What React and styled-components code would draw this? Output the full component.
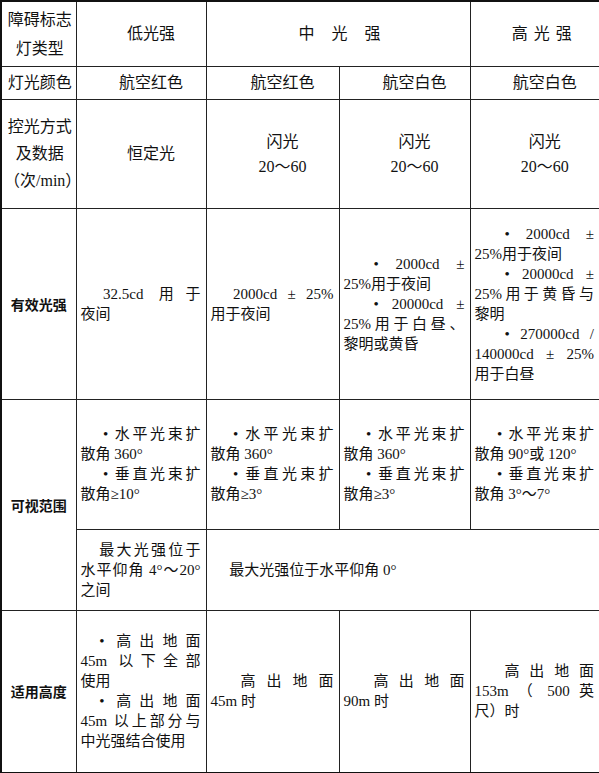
import React from 'react'
import styled, { createGlobalStyle } from 'styled-components'

const GlobalStyle = createGlobalStyle`
  html, body {
    margin: 0;
    padding: 0;
    background: #fff;
  }
  body {
    font-family: "Liberation Serif", "Noto Sans CJK SC", serif;
    color: #111;
  }
`

const Sheet = styled.table`
  width: 599px;
  table-layout: fixed;
  border-collapse: collapse;
  border: 2px solid #111;
`

const Row = styled.tr`
  height: ${p => p.$h}px;
`

const Head = styled.td`
  border: 1px solid #222;
  text-align: center;
  vertical-align: middle;
  font-size: 16px;
  line-height: ${p => p.$lh || 26}px;
  padding: 0 0 0 ${p => (p.$pl === undefined ? 20 : p.$pl)}px;
  letter-spacing: ${p => p.$ls || 0}px;
`

const Label = styled.td`
  border: 1px solid #222;
  text-align: center;
  vertical-align: middle;
  padding: 0 2px;
  font-family: "Noto Sans CJK SC", sans-serif;
  font-size: 14px;
  font-weight: 700;
`

const Text = styled.td`
  border: 1px solid #222;
  vertical-align: middle;
  padding: 0 5px 0 4px;
  font-size: 15px;
  line-height: 20px;
`

const Line = styled.span`
  display: block;
  text-align: ${p => (p.$fill ? 'justify' : 'left')};
  text-align-last: ${p => (p.$fill ? 'justify' : 'auto')};
  text-indent: ${p => p.$indent || 0};
`

const Block = ({ paras, indent = '2em' }) =>
  paras.map((lines, i) => (
    <div key={i}>
      {lines.map((t, j) => (
        <Line key={j} $fill={j < lines.length - 1} $indent={j === 0 ? indent : 0}>
          {t}
        </Line>
      ))}
    </div>
  ))

const intensity = [
  { indent: '1.5em', paras: [['32.5cd 用于', '夜间']] },
  { indent: '1.5em', paras: [['2000cd ± 25%', '用于夜间']] },
  {
    paras: [
      ['• 2000cd ±', '25%用于夜间'],
      ['• 20000cd ±', '25%用于白昼、', '黎明或黄昏'],
    ],
  },
  {
    paras: [
      ['• 2000cd ±', '25%用于夜间'],
      ['• 20000cd ±', '25%用于黄昏与', '黎明'],
      ['• 270000cd /', '140000cd ± 25%', '用于白昼'],
    ],
  },
]

const beam = [
  [['• 水平光束扩', '散角 360°'], ['• 垂直光束扩', '散角≥10°']],
  [['• 水平光束扩', '散角 360°'], ['• 垂直光束扩', '散角≥3°']],
  [['• 水平光束扩', '散角 360°'], ['• 垂直光束扩', '散角≥3°']],
  [['• 水平光束扩', '散角 90°或 120°'], ['• 垂直光束扩', '散角 3°～7°']],
]

const height = [
  {
    indent: '1.25em',
    paras: [
      ['• 高出地面', '45m 以下全部', '使用'],
      ['• 高出地面', '45m 以上部分与', '中光强结合使用'],
    ],
  },
  { paras: [['高出地面', '45m 时']] },
  { paras: [['高出地面', '90m 时']] },
  { paras: [['高出地面', '153m （ 500 英', '尺）时']] },
]

const App = () => (
  <>
    <GlobalStyle />
    <Sheet>
      <colgroup>
        <col style={{ width: 75 }} />
        <col style={{ width: 130 }} />
        <col style={{ width: 133 }} />
        <col style={{ width: 131 }} />
        <col style={{ width: 130 }} />
      </colgroup>
      <tbody>
        <Row $h={65}>
          <Head $pl={2} $lh={29}>
            障碍标志
            <br />
            灯类型
          </Head>
          <Head>低光强</Head>
          <Head colSpan={2} $ls={17}>
            中光强
          </Head>
          <Head $ls={6}>高光强</Head>
        </Row>
        <Row $h={33}>
          <Head $pl={2}>灯光颜色</Head>
          <Head>航空红色</Head>
          <Head>航空红色</Head>
          <Head>航空白色</Head>
          <Head>航空白色</Head>
        </Row>
        <Row $h={109}>
          <Head $pl={2} $lh={27}>
            控光方式
            <br />
            及数据
            <br />
            （次/min）
          </Head>
          <Head>恒定光</Head>
          {[0, 1, 2].map(i => (
            <Head key={i} $lh={25}>
              闪光
              <br />
              20～60
            </Head>
          ))}
        </Row>
        <Row $h={191}>
          <Label>有效光强</Label>
          {intensity.map((c, i) => (
            <Text key={i}>
              <Block paras={c.paras} indent={c.indent} />
            </Text>
          ))}
        </Row>
        <Row $h={130}>
          <Label rowSpan={2}>可视范围</Label>
          {beam.map((paras, i) => (
            <Text key={i}>
              <Block paras={paras} indent="1.5em" />
            </Text>
          ))}
        </Row>
        <Row $h={81}>
          <Text>
            <Block paras={[['最大光强位于', '水平仰角 4°～20°', '之间']]} indent="1.25em" />
          </Text>
          <Text colSpan={3}>
            <Block paras={[['最大光强位于水平仰角 0°']]} indent="1.25em" />
          </Text>
        </Row>
        <Row $h={163}>
          <Label>适用高度</Label>
          {height.map((c, i) => (
            <Text key={i}>
              <Block paras={c.paras} indent={c.indent} />
            </Text>
          ))}
        </Row>
      </tbody>
    </Sheet>
  </>
)

export default App
